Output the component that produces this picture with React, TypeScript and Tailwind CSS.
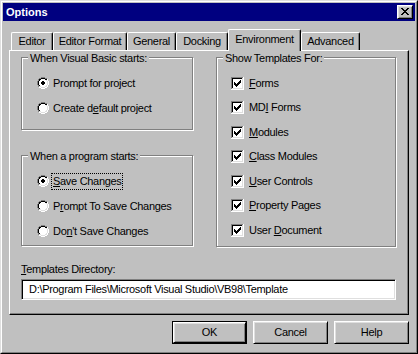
import React from 'react';

const COLORS: Record<string, string> = {
  G: '#808080',
  K: '#000000',
  W: '#ffffff',
  w: '#ffffff',
  L: '#dfdfdf',
};

function Pix({ rows }: { rows: string[] }) {
  const h = rows.length;
  const w = rows[0].length;
  const rects: React.ReactElement[] = [];
  rows.forEach((r, y) => {
    for (let x = 0; x < r.length; x++) {
      const col = COLORS[r[x]];
      if (col) rects.push(<rect key={x + '-' + y} x={x} y={y} width={1} height={1} fill={col} />);
    }
  });
  return (
    <svg width={w} height={h} viewBox={`0 0 ${w} ${h}`} shapeRendering="crispEdges" className="block shrink-0">
      {rects}
    </svg>
  );
}

const RADIO_OFF = [
  '....GGGG....',
  '..GGKKKKGG..',
  '.GKKwwwwKKW.',
  '.GKwwwwwwLW.',
  'GKwwwwwwwwLW',
  'GKwwwwwwwwLW',
  'GKwwwwwwwwLW',
  'GKwwwwwwwwLW',
  '.GKwwwwwwLW.',
  '.GLLwwwwLLW.',
  '..WWLLLLWW..',
  '....WWWW....',
];

const RADIO_ON = [
  '....GGGG....',
  '..GGKKKKGG..',
  '.GKKwwwwKKW.',
  '.GKwwwwwwLW.',
  'GKwwwKKwwwLW',
  'GKwwKKKKwwLW',
  'GKwwKKKKwwLW',
  'GKwwwKKwwwLW',
  '.GKwwwwwwLW.',
  '.GLLwwwwLLW.',
  '..WWLLLLWW..',
  '....WWWW....',
];

const CHECK_ON = [
  'GGGGGGGGGGGGW',
  'GKKKKKKKKKKLW',
  'GKwwwwwwwwwLW',
  'GKwwwwwwwKwLW',
  'GKwwwwwwKKwLW',
  'GKwKwwwKKKwLW',
  'GKwKKwKKKwwLW',
  'GKwKKKKKwwwLW',
  'GKwwKKKwwwwLW',
  'GKwwwKwwwwwLW',
  'GKwwwwwwwwwLW',
  'GLLLLLLLLLLLW',
  'WWWWWWWWWWWWW',
];

const CLOSE_X = [
  'KK....KK',
  '.KK..KK.',
  '..KKKK..',
  '...KK...',
  '..KKKK..',
  '.KK..KK.',
  'KK....KK',
];

const raised =
  'border border-t-white border-l-white border-r-black border-b-black shadow-[inset_1px_1px_0_#dfdfdf,inset_-1px_-1px_0_#808080]';

function Group({
  label,
  className,
  children,
}: {
  label: string;
  className: string;
  children: React.ReactNode;
}) {
  return (
    <div
      className={
        'relative border border-[#808080] shadow-[inset_1px_1px_0_#ffffff,1px_1px_0_#ffffff] flex flex-col pt-[19px] ' +
        className
      }
    >
      <span className="absolute left-[6px] -top-[6px] bg-[#c0c0c0] px-[2px] leading-[13px]">{label}</span>
      {children}
    </div>
  );
}

function Radio({ on, className, children }: { on?: boolean; className?: string; children: React.ReactNode }) {
  return (
    <div className={'flex items-start gap-[4px] h-[13px] ' + (className || '')}>
      <Pix rows={on ? RADIO_ON : RADIO_OFF} />
      <span className="leading-[13px] whitespace-nowrap">{children}</span>
    </div>
  );
}

function Check({ className, children }: { className?: string; children: React.ReactNode }) {
  return (
    <div className={'flex items-start gap-[5px] h-[13px] ' + (className || '')}>
      <Pix rows={CHECK_ON} />
      <span className="leading-[13px] whitespace-nowrap">{children}</span>
    </div>
  );
}

function U({ children }: { children: React.ReactNode }) {
  return <span className="underline">{children}</span>;
}

function Tab({ label, className }: { label: string; className: string }) {
  return (
    <div
      className={
        'h-[18px] border-l border-t border-r border-l-white border-t-white border-r-black shadow-[inset_-1px_0_0_#808080] rounded-t-[2px] flex justify-center pt-[2px] whitespace-nowrap ' +
        className
      }
    >
      {label}
    </div>
  );
}

export default function App() {
  return (
    <div className="w-[418px] h-[354px] bg-[#c0c0c0] border border-t-[#dfdfdf] border-l-[#dfdfdf] border-r-black border-b-black font-['Liberation_Sans',Arial,sans-serif] text-[11px] leading-[13px] text-black tracking-[-0.3px]">
      <div className="h-full border border-t-white border-l-white border-r-[#808080] border-b-[#808080] p-[1px] flex flex-col">
        {/* Title bar */}
        <div className="h-[18px] bg-[#000080] flex items-center justify-between pl-[3px] pr-[2px]">
          <span className="text-white font-bold tracking-normal">Options</span>
          <div className={'w-[16px] h-[14px] bg-[#c0c0c0] flex justify-center items-start pt-[2px] ' + raised}>
            <Pix rows={CLOSE_X} />
          </div>
        </div>

        {/* Body */}
        <div className="px-[6px] pt-[8px] flex flex-col">
          {/* Tabs */}
          <div className="flex items-end h-[21px] pl-[2px]">
            <Tab label="Editor" className="w-[42px]" />
            <Tab label="Editor Format" className="w-[74px]" />
            <Tab label="General" className="w-[49px]" />
            <Tab label="Docking" className="w-[52px]" />
            <div className="relative z-10 w-[73px] h-[22px] -mb-[1px] bg-[#c0c0c0] border-l border-t border-r border-l-white border-t-white border-r-black shadow-[inset_-1px_0_0_#808080] rounded-t-[2px] flex justify-center pt-[3px] whitespace-nowrap">
              Environment
            </div>
            <Tab label="Advanced" className="w-[59px]" />
          </div>

          {/* Panel */}
          <div className="h-[265px] w-[400px] border border-l-white border-t-white border-r-black border-b-black shadow-[inset_-1px_-1px_0_#808080] pt-[6px] pl-[11px] pr-[11px] flex flex-col">
            <div className="flex items-start gap-[23px]">
              <div className="flex flex-col w-[172px]">
                <Group label="When Visual Basic starts:" className="h-[73px] pl-[15px]">
                  <Radio on>
                    Prompt for pro<U>j</U>ect
                  </Radio>
                  <Radio className="mt-[12px]">
                    Create d<U>e</U>fault project
                  </Radio>
                </Group>
                <Group label="When a program starts:" className="h-[91px] pl-[15px] mt-[25px]">
                  <Radio on>
                    <span className="relative inline-block">
                      <U>S</U>ave Changes
                      <span className="absolute -left-[2px] -right-[1px] -top-[2px] -bottom-[2px] border border-dotted border-black" />
                    </span>
                  </Radio>
                  <Radio className="mt-[12px]">
                    P<U>r</U>ompt To Save Changes
                  </Radio>
                  <Radio className="mt-[12px]">
                    Do<U>n</U>'t Save Changes
                  </Radio>
                </Group>
              </div>
              <Group label="Show Templates For:" className="h-[190px] w-[180px] pl-[14px]">
                <Check>
                  <U>F</U>orms
                </Check>
                <Check className="mt-[11px]">
                  MD<U>I</U> Forms
                </Check>
                <Check className="mt-[12px]">
                  <U>M</U>odules
                </Check>
                <Check className="mt-[11px]">
                  <U>C</U>lass Modules
                </Check>
                <Check className="mt-[12px]">
                  <U>U</U>ser Controls
                </Check>
                <Check className="mt-[11px]">
                  <U>P</U>roperty Pages
                </Check>
                <Check className="mt-[12px]">
                  User <U>D</U>ocument
                </Check>
              </Group>
            </div>

            <div className="mt-[16px] leading-[13px]">
              <U>T</U>emplates Directory:
            </div>
            <div className="mt-[3px] w-[375px] h-[21px] bg-white border border-t-[#808080] border-l-[#808080] border-r-white border-b-white shadow-[inset_1px_1px_0_#000000,inset_-1px_-1px_0_#dfdfdf] flex items-center pl-[7px] whitespace-nowrap">
              D:\Program Files\Microsoft Visual Studio\VB98\Template
            </div>
          </div>

          {/* Buttons */}
          <div className="flex justify-end gap-[6px] mt-[6px] w-[400px]">
            <div className="w-[75px] h-[23px] border border-black">
              <div className={'w-full h-full flex items-center justify-center ' + raised}>OK</div>
            </div>
            <div className={'w-[75px] h-[23px] flex items-center justify-center ' + raised}>Cancel</div>
            <div className={'w-[75px] h-[23px] flex items-center justify-center ' + raised}>Help</div>
          </div>
        </div>
      </div>
    </div>
  );
}
